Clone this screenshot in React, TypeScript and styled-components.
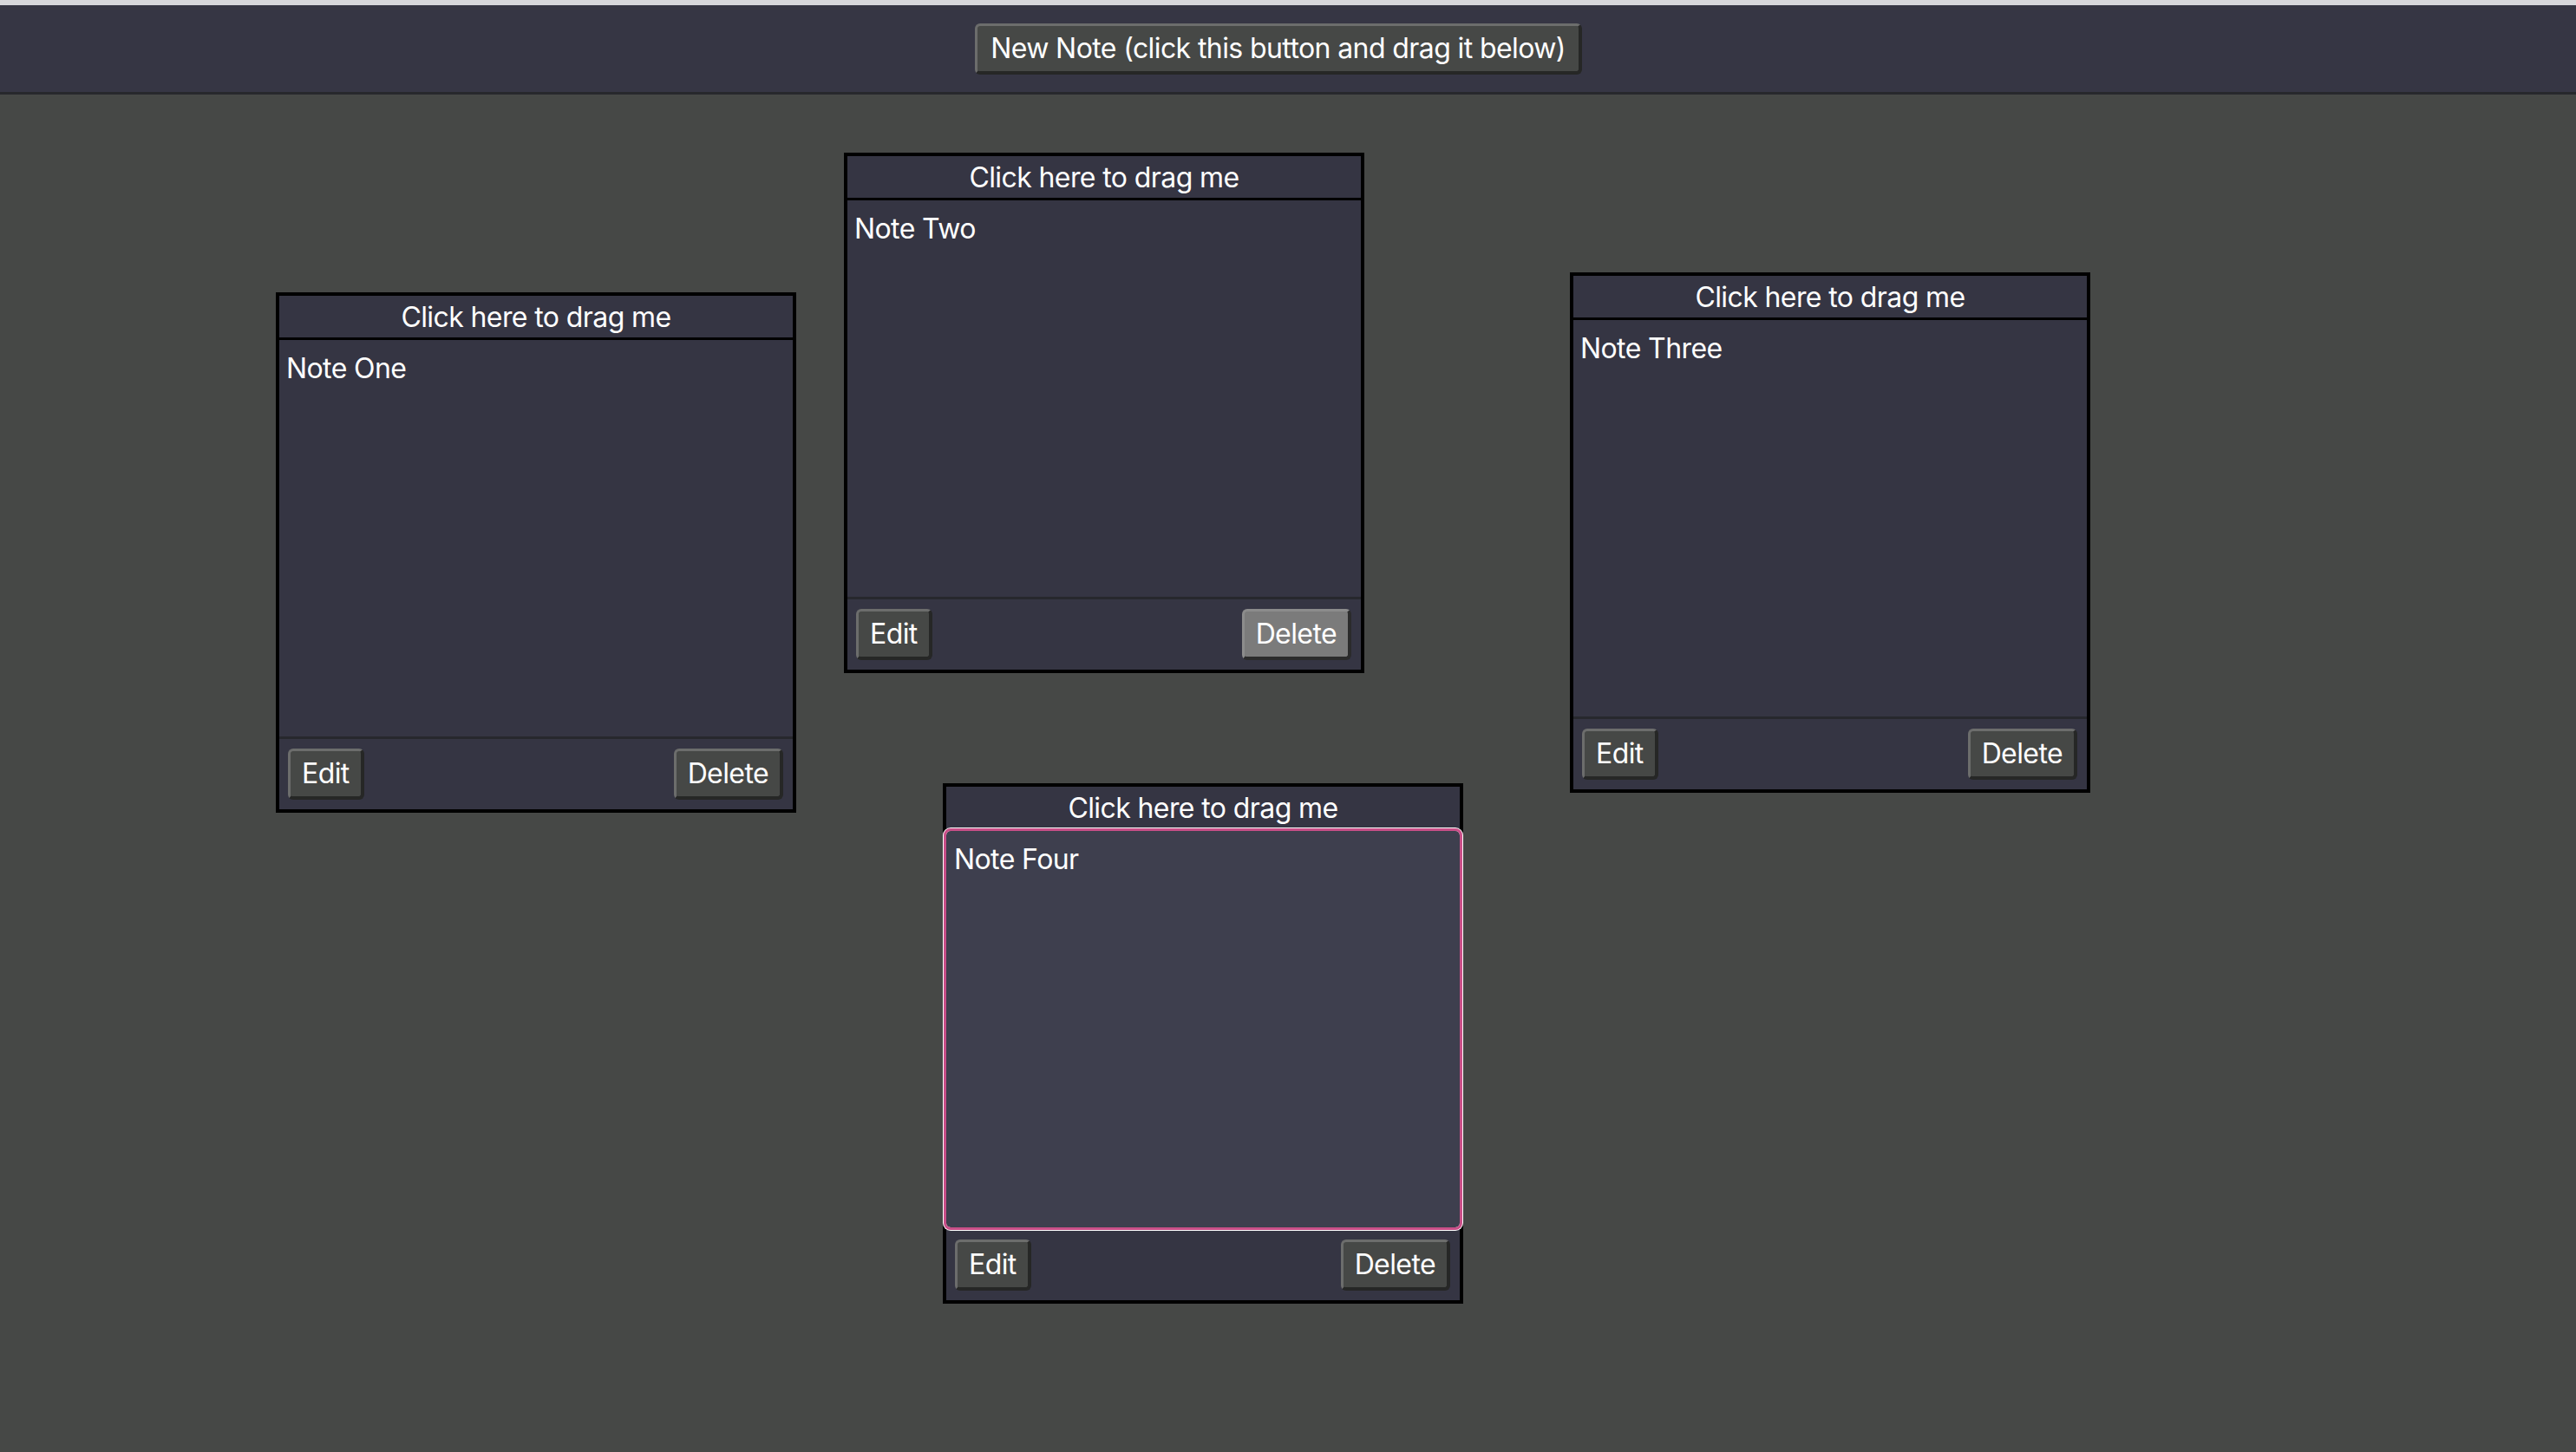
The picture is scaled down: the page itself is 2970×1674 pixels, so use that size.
import React from "react";
import styled, { createGlobalStyle, css } from "styled-components";

const GlobalStyle = createGlobalStyle`
  html, body {
    margin: 0;
    padding: 0;
    background: #464846;
  }
  body {
    font-family: Inter, "Noto Sans", "Liberation Sans", sans-serif;
    color: #ffffff;
    letter-spacing: -0.6px;
  }
  * { box-sizing: border-box; }
`;

const Page = styled.div`
  min-height: 100vh;
  display: flex;
  flex-direction: column;
  background: #464846;
`;

const Toolbar = styled.header`
  height: 109px;
  border-top: 6px solid #d7d7db;
  border-bottom: 3px solid #27282c;
  background: #363644;
  display: flex;
  align-items: center;
  justify-content: center;
  padding-right: 22px;
`;

const Button = styled.button<{ $hover?: boolean }>`
  height: 59px;
  padding: 0 13px;
  font-family: Inter, "Noto Sans", "Liberation Sans", sans-serif;
  font-size: 32px;
  letter-spacing: -0.6px;
  color: #ffffff;
  background: #464846;
  border-style: solid;
  border-width: 3px 4px 4px 3px;
  border-color: #6c6d6c #262726 #262726 #6c6d6c;
  border-radius: 6px;
  cursor: pointer;
  line-height: 1;
  ${(p) =>
    p.$hover &&
    css`
      background: #7b7b7b;
      border-color: #8c8c8c #2b2b2b #2b2b2b #8c8c8c;
    `}
`;

const NewNoteButton = styled(Button)`
  padding: 0 15px;
`;

const Canvas = styled.main`
  position: relative;
  flex: 1;
`;

const Note = styled.section<{ $x: number; $y: number }>`
  position: absolute;
  left: ${(p) => p.$x}px;
  top: ${(p) => p.$y}px;
  width: 600px;
  height: 600px;
  border: 4px solid #000000;
  background: #353543;
  display: flex;
  flex-direction: column;
`;

const NoteHeader = styled.div`
  height: 51px;
  flex: none;
  border-bottom: 3px solid #000000;
  display: flex;
  align-items: center;
  justify-content: center;
  font-size: 32px;
  padding-top: 1px;
  cursor: move;
`;

const NoteBody = styled.div<{ $focused?: boolean }>`
  flex: 1;
  padding: 13px 8px;
  font-size: 32px;
  line-height: normal;
  background: #353543;
  ${(p) =>
    p.$focused &&
    css`
      position: relative;
      z-index: 1;
      background: #3e3f4e;
      border-radius: 5px;
      padding: 13px 9px;
      outline: 3px solid #c94f88;
      box-shadow: 0 0 0 4px #ffffff;
    `}
`;

const NoteFooter = styled.div`
  height: 84px;
  flex: none;
  border-top: 3px solid #27282d;
  display: flex;
  align-items: center;
  justify-content: space-between;
  padding: 0 11px 0 10px;
`;

type NoteData = {
  id: number;
  text: string;
  x: number;
  y: number;
  focused?: boolean;
  hoverDelete?: boolean;
};

const notes: NoteData[] = [
  { id: 1, text: "Note One", x: 318, y: 228 },
  { id: 2, text: "Note Two", x: 973, y: 67, hoverDelete: true },
  { id: 3, text: "Note Three", x: 1810, y: 205 },
  { id: 4, text: "Note Four", x: 1087, y: 794, focused: true },
];

export default function App() {
  return (
    <>
      <GlobalStyle />
      <Page>
        <Toolbar>
          <NewNoteButton>New Note (click this button and drag it below)</NewNoteButton>
        </Toolbar>
        <Canvas>
          {notes.map((n) => (
            <Note key={n.id} $x={n.x} $y={n.y}>
              <NoteHeader>Click here to drag me</NoteHeader>
              <NoteBody $focused={n.focused}>{n.text}</NoteBody>
              <NoteFooter>
                <Button>Edit</Button>
                <Button $hover={n.hoverDelete}>Delete</Button>
              </NoteFooter>
            </Note>
          ))}
        </Canvas>
      </Page>
    </>
  );
}
